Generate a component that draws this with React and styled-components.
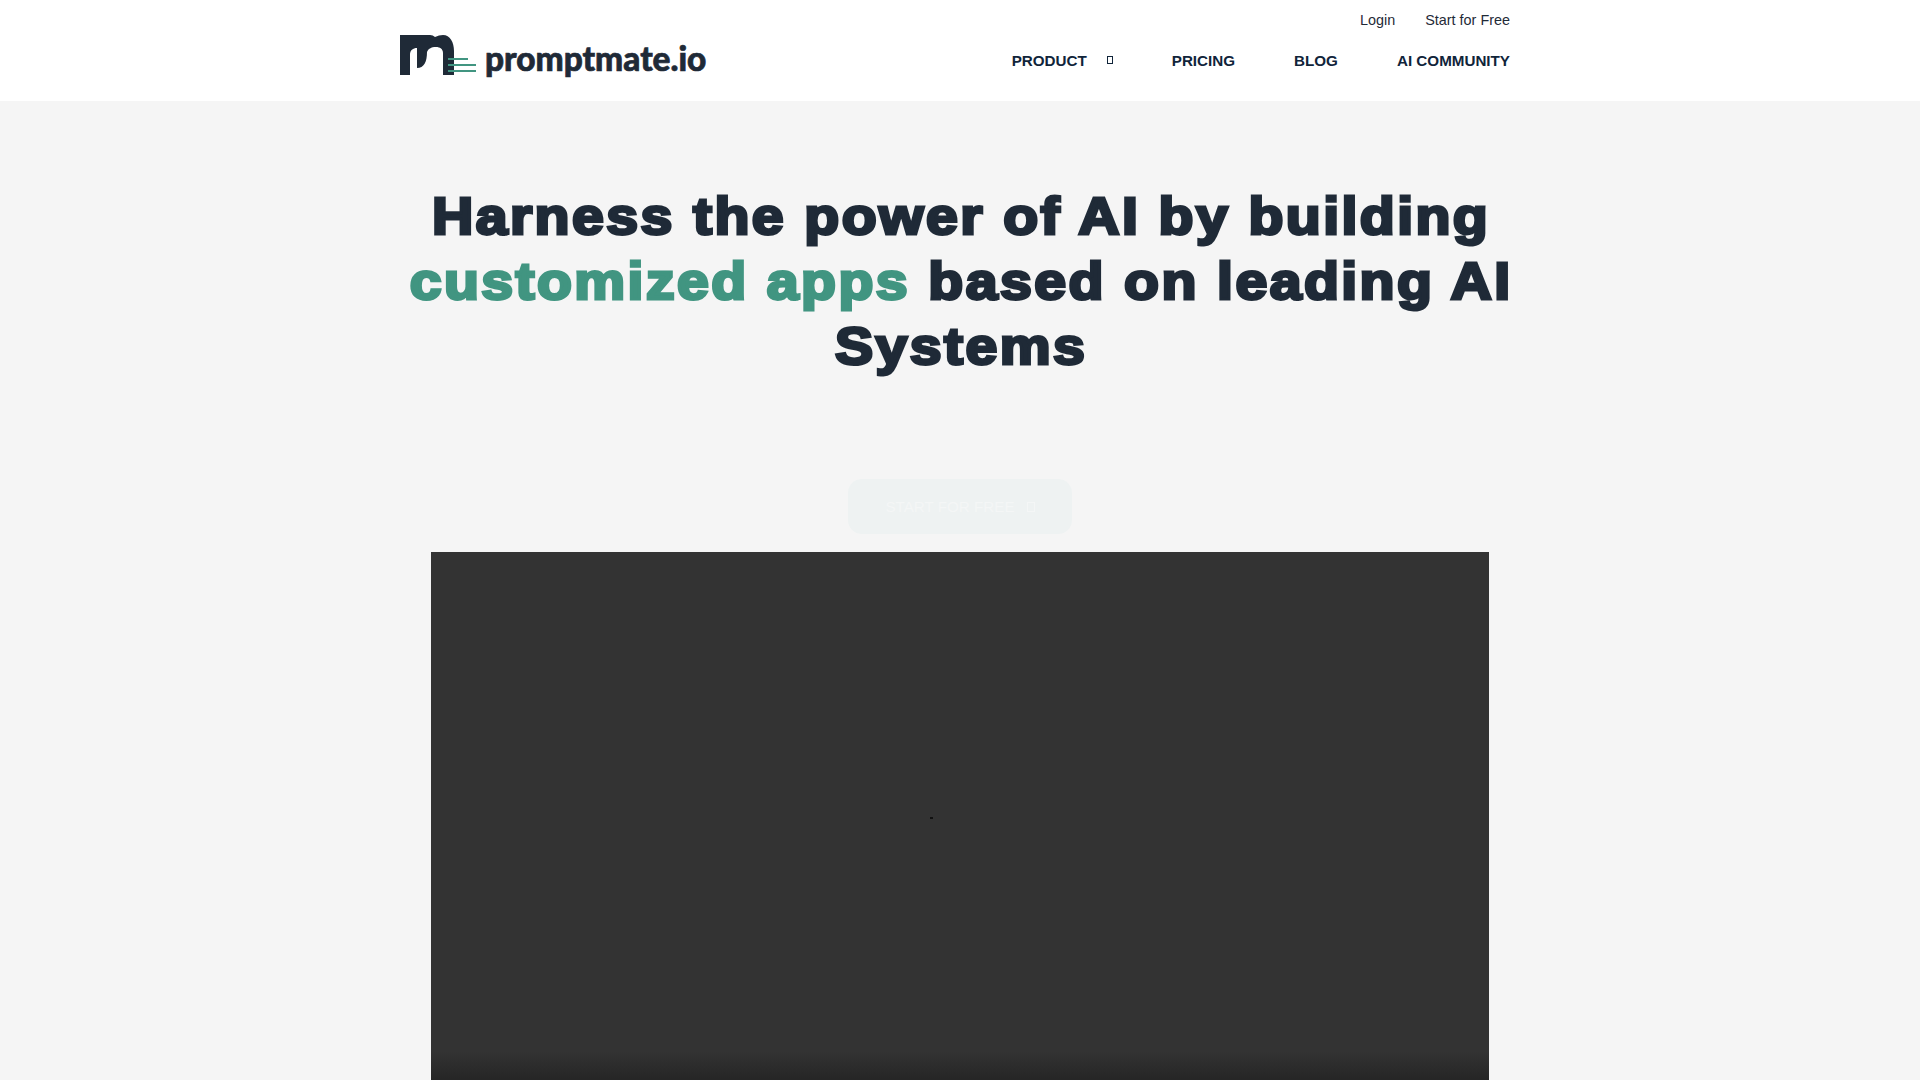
import React from "react";
import styled, { createGlobalStyle } from "styled-components";

const GlobalStyle = createGlobalStyle`
html, body {
    margin: 0;
    padding: 0;
    background: #f5f5f5;
    overflow: hidden;
}
* { box-sizing: border-box; }
`

const Page = styled.div`
height: 100vh;
overflow: hidden;
font-family: "Liberation Sans", Arial, sans-serif;
color: #1f2a37;
`

const Header = styled.header`
height: 101px;
background: #fff;
display: flex;
justify-content: space-between;
padding: 0 410px 0 400px;
`

const LogoLink = styled.a`
display: flex;
align-items: flex-start;
gap: 9px;
padding-top: 35px;
text-decoration: none;
`

const LogoText = styled.span`
font-family: Lato, "Liberation Sans", sans-serif;
font-weight: 900;
font-size: 33.4px;
line-height: 40px;
margin-top: 3px;
color: #1f2a37;
-webkit-text-stroke: 0.7px currentColor;
`

const NavColumn = styled.div`
display: flex;
flex-direction: column;
align-items: flex-end;
`

const TopLinks = styled.div`
display: flex;
gap: 30px;
height: 40px;
align-items: center;
`

const TopLink = styled.a`
font-size: 14.4px;
color: #1f2a37;
`

const MainNav = styled.nav`
display: flex;
gap: 59px;
height: 40px;
align-items: center;
`

const NavLink = styled.a`
display: flex;
align-items: center;
font-size: 15.2px;
font-weight: 700;
color: #10243a;
text-transform: uppercase;
`

const MissingGlyph = styled.i`
display: block;
width: ${props => props.$w}px;
height: ${props => props.$h}px;
margin-left: ${props => props.$gap}px;
border: 1px solid currentColor;
`

const Hero = styled.main`
display: flex;
flex-direction: column;
align-items: center;
padding-top: 83px;
`

/* the reference face is wider and heavier than Liberation bold */
const Title = styled.h1`
width: 1010px;
margin: 0;
padding-left: 2px;
font-size: 52px;
line-height: 65px;
font-weight: 700;
letter-spacing: 2.2px;
text-align: center;
color: #1f2a37;
-webkit-text-stroke: 3px currentColor;
transform: scaleX(1.1);
`

const Accent = styled.span`
color: #419581;
`

const StartButton = styled.a`
display: flex;
align-items: center;
justify-content: center;
width: 224px;
height: 55px;
margin-top: 100px;
border-radius: 14px;
background: #eef2f2;
color: #f4f6f6;
font-size: 15.2px;
`

const VideoBox = styled.div`
position: relative;
width: 1058px;
height: 595px;
margin-top: 18px;
background: linear-gradient(to bottom, #333 0, #333 84%, #262626 88.5%);
`

const Spinner = styled.span`
position: absolute;
left: 499px;
top: 265px;
width: 3px;
height: 2px;
background: #111;
`

function LogoMark() {
    return (
        <svg width="76" height="40" viewBox="0 0 76 40" aria-hidden="true">
            <path
                d="M0 0H30Q33 0 35 2Q39 0 43 0C50 0 54 7 54 16V40H43V18C43 14 40 12 36 12C31 12 28 14 27 17C27 27 24 33 17 33V13C13 13 10 15 10 20V40H0Z"
                fill="#1f2a37"
            />
            <path d="M48 24H68M48 30H76M48 36H76" stroke="#419581" strokeWidth="2" />
        </svg>
    )
}

export default function App() {
    return (
        <Page>
            <GlobalStyle />
            <Header>
                <LogoLink>
                    <LogoMark />
                    <LogoText>promptmate.io</LogoText>
                </LogoLink>
                <NavColumn>
                    <TopLinks>
                        <TopLink>Login</TopLink>
                        <TopLink>Start for Free</TopLink>
                    </TopLinks>
                    <MainNav>
                        <NavLink>Product<MissingGlyph $gap={20} $w={6} $h={8} /></NavLink>
                        <NavLink>Pricing</NavLink>
                        <NavLink>Blog</NavLink>
                        <NavLink>AI Community</NavLink>
                    </MainNav>
                </NavColumn>
            </Header>
            <Hero>
                <Title>
                    Harness the power of AI by building <Accent>customized apps</Accent> based on leading AI Systems
                </Title>
                <StartButton>START FOR FREE<MissingGlyph $gap={12} $w={8} $h={10} /></StartButton>
                <VideoBox>
                    <Spinner />
                </VideoBox>
            </Hero>
        </Page>
    )
}
